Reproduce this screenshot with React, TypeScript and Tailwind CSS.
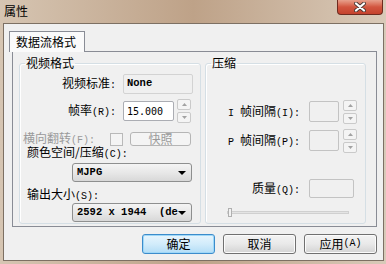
const cjk = "font-['Noto_Sans_CJK_SC',sans-serif]";

const M = ({ children }: { children: React.ReactNode }) => (
  <span className="font-['Liberation_Mono',monospace] text-[10px]">{children}</span>
);

const Arrow = ({ down, color = '#a2a2a2' }: { down?: boolean; color?: string }) => (
  <svg width="5" height="3" viewBox="0 0 5 3">
    <path d={down ? 'M0 0H5L2.5 3z' : 'M2.5 0L5 3H0z'} fill={color} />
  </svg>
);

const Spin = () => (
  <div className="flex flex-col gap-[2px]">
    <div className="w-[14px] h-[11px] border border-[#cacaca] rounded-[2px] bg-[#f4f4f4] flex items-center justify-center">
      <Arrow />
    </div>
    <div className="w-[14px] h-[11px] border border-[#cacaca] rounded-[2px] bg-[#f4f4f4] flex items-center justify-center">
      <Arrow down />
    </div>
  </div>
);

const Combo = ({ text }: { text: string }) => (
  <div className="ml-[52px] w-[120px] h-[19px] border border-[#8e8f8f] rounded-[3px] bg-linear-to-b from-[#f4f4f4] via-[#e8e8e8] to-[#d8d8d8] flex items-center justify-between pl-[4px] pr-[5px]">
    <span className="font-['Liberation_Mono',monospace] font-bold text-[10.5px] leading-none whitespace-pre text-black">
      {text}
    </span>
    <svg width="8" height="4" viewBox="0 0 8 4">
      <path d="M0 0H8L4 4z" fill="#000" />
    </svg>
  </div>
);

const Btn = ({ children, primary }: { children: React.ReactNode; primary?: boolean }) => (
  <div
    className={
      primary
        ? 'w-[73px] h-[20px] rounded-[3px] border border-[#3c8ccb] bg-linear-to-b from-[#e8f5fd] via-[#d2ecfb] to-[#b3ddf6] shadow-[inset_0_0_0_1px_#9fd8f8] flex items-center justify-center text-[12px] leading-none text-black'
        : 'w-[73px] h-[20px] rounded-[3px] border border-[#707070] bg-linear-to-b from-[#f3f3f3] via-[#e9e9e9] to-[#d3d3d3] shadow-[inset_0_0_0_1px_#fbfbfb] flex items-center justify-center text-[12px] leading-none text-black'
    }
  >
    {children}
  </div>
);

export default function App() {
  return (
    <div className={`w-[386px] h-[264px] overflow-hidden flex flex-col bg-linear-to-r from-[#d6c5b2] via-[#bea288] to-[#d9cab9] ${cjk}`}>
      {/* title bar */}
      <div className="h-[23px] flex items-start justify-between">
        <span className="ml-[4px] mt-[3px] text-[12px] leading-[15px] text-black">属性</span>
        <div className="mr-[3px] w-[46px] h-[15px] rounded-b-[4px] border border-t-0 border-[#6e2b20] bg-linear-to-b from-[#e7a08c] via-[#d2553f] to-[#c4432e] flex items-center justify-center">
          <svg width="12" height="10" viewBox="0 0 12 10">
            <path d="M2 1.5L10 8.5M10 1.5L2 8.5" stroke="#4a3a36" strokeWidth="4" strokeLinecap="round" />
            <path d="M2 1.5L10 8.5M10 1.5L2 8.5" stroke="#fff" strokeWidth="2.2" strokeLinecap="round" />
          </svg>
        </div>
      </div>

      {/* client area */}
      <div className="ml-[3px] w-[381px] h-[238px] border border-[#7d7063] bg-[#f0f0f0] flex flex-col">
        <div className="pt-[7px] pl-[5px] flex">
          <div className="relative z-10 -mb-[1px] w-[76px] h-[21px] border border-b-0 border-[#898c95] bg-[#fafafa] flex items-center pl-[6px] text-[12px] leading-none text-black">
            数据流格式
          </div>
        </div>

        <div className="ml-[8px] w-[365px] h-[176px] border border-[#898c95] bg-[#f0f0f0] flex items-start pl-[6px] pt-[4px] gap-[4px] text-[12px] text-black">
          {/* 视频格式 */}
          <fieldset className="w-[182px] h-[168px] border border-[#d5dfe5] rounded-[3px] shadow-[inset_1px_1px_0_#fff]">
            <legend className="ml-[5px] px-[1px] text-[12px] leading-[14px]">视频格式</legend>
            <div className="flex flex-col">
              <div className="mt-[4px] h-[20px] flex items-center">
                <span className="w-[96px] text-right leading-none">视频标准<M>:</M></span>
                <div className="ml-[7px] w-[70px] h-[20px] border border-[#d3d3d3] rounded-[2px] bg-[#f0f0f0] flex items-center pl-[3px] font-['Liberation_Mono',monospace] font-bold text-[10.5px]">
                  None
                </div>
              </div>
              <div className="mt-[7px] h-[20px] flex items-center">
                <span className="w-[96px] text-right leading-none">帧率<M>(R):</M></span>
                <div className="ml-[7px] w-[51px] h-[20px] border border-[#abadb3] rounded-[2px] bg-white flex items-center pl-[3px] font-['DejaVu_Sans_Mono',monospace] text-[10px]">
                  15.000
                </div>
                <div className="ml-[3px]">
                  <Spin />
                </div>
              </div>
              <div className="mt-[11px] h-[14px] flex items-center text-[#9a9a9a]">
                <span className="ml-[3px] w-[87px] leading-none">横向翻转<M>(F):</M></span>
                <div className="w-[13px] h-[13px] border border-[#b9b9b9] bg-[#f4f4f4]" />
                <div className="ml-[7px] w-[61px] h-[14px] border border-[#b5b5b5] rounded-[3px] bg-[#f4f4f4] flex items-center justify-center leading-none">
                  快照
                </div>
              </div>
              <div className="ml-[7px] h-[12px] leading-[12px]">
                颜色空间/压缩<M>(C):</M>
              </div>
              <div className="mt-[5px]">
                <Combo text="MJPG" />
              </div>
              <div className="mt-[6px] ml-[7px] h-[12px] leading-[12px]">
                输出大小<M>(S):</M>
              </div>
              <div className="mt-[3px]">
                <Combo text="2592 x 1944  (de" />
              </div>
            </div>
          </fieldset>

          {/* 压缩 */}
          <fieldset className="w-[161px] h-[168px] border border-[#d5dfe5] rounded-[3px] shadow-[inset_1px_1px_0_#fff]">
            <legend className="ml-[5px] px-[1px] text-[12px] leading-[14px]">压缩</legend>
            <div className="flex flex-col">
              <div className="mt-[31px] h-[21px] flex items-center">
                <span className="w-[94px] text-right leading-none">
                  <M>I </M>帧间隔<M>(I):</M>
                </span>
                <div className="ml-[9px] w-[30px] h-[21px] border border-[#c3c3c3] rounded-[2px] bg-[#f0f0f0]" />
                <div className="ml-[4px]">
                  <Spin />
                </div>
              </div>
              <div className="mt-[8px] h-[21px] flex items-center">
                <span className="w-[94px] text-right leading-none">
                  <M>P </M>帧间隔<M>(P):</M>
                </span>
                <div className="ml-[9px] w-[30px] h-[21px] border border-[#c3c3c3] rounded-[2px] bg-[#f0f0f0]" />
                <div className="ml-[4px]">
                  <Spin />
                </div>
              </div>
              <div className="mt-[28px] h-[19px] flex items-center">
                <span className="w-[94px] text-right leading-none">质量<M>(Q):</M></span>
                <div className="ml-[9px] w-[45px] h-[19px] border border-[#c3c3c3] rounded-[2px] bg-[#f0f0f0]" />
              </div>
              <div className="mt-[10px] ml-[21px] w-[122px] h-[9px] relative flex items-center">
                <div className="w-full h-[3px] border border-[#d0d0d0] bg-[#e4e4e4]" />
                <div className="absolute left-[1px] top-0 w-[4px] h-[9px] border border-[#b0b0b0] bg-[#f2f2f2]" />
              </div>
            </div>
          </fieldset>
        </div>

        <div className="mt-[7px] pr-[6px] flex justify-end gap-[8px]">
          <Btn primary>确定</Btn>
          <Btn>取消</Btn>
          <Btn>
            应用<M>(A)</M>
          </Btn>
        </div>
      </div>
    </div>
  );
}
